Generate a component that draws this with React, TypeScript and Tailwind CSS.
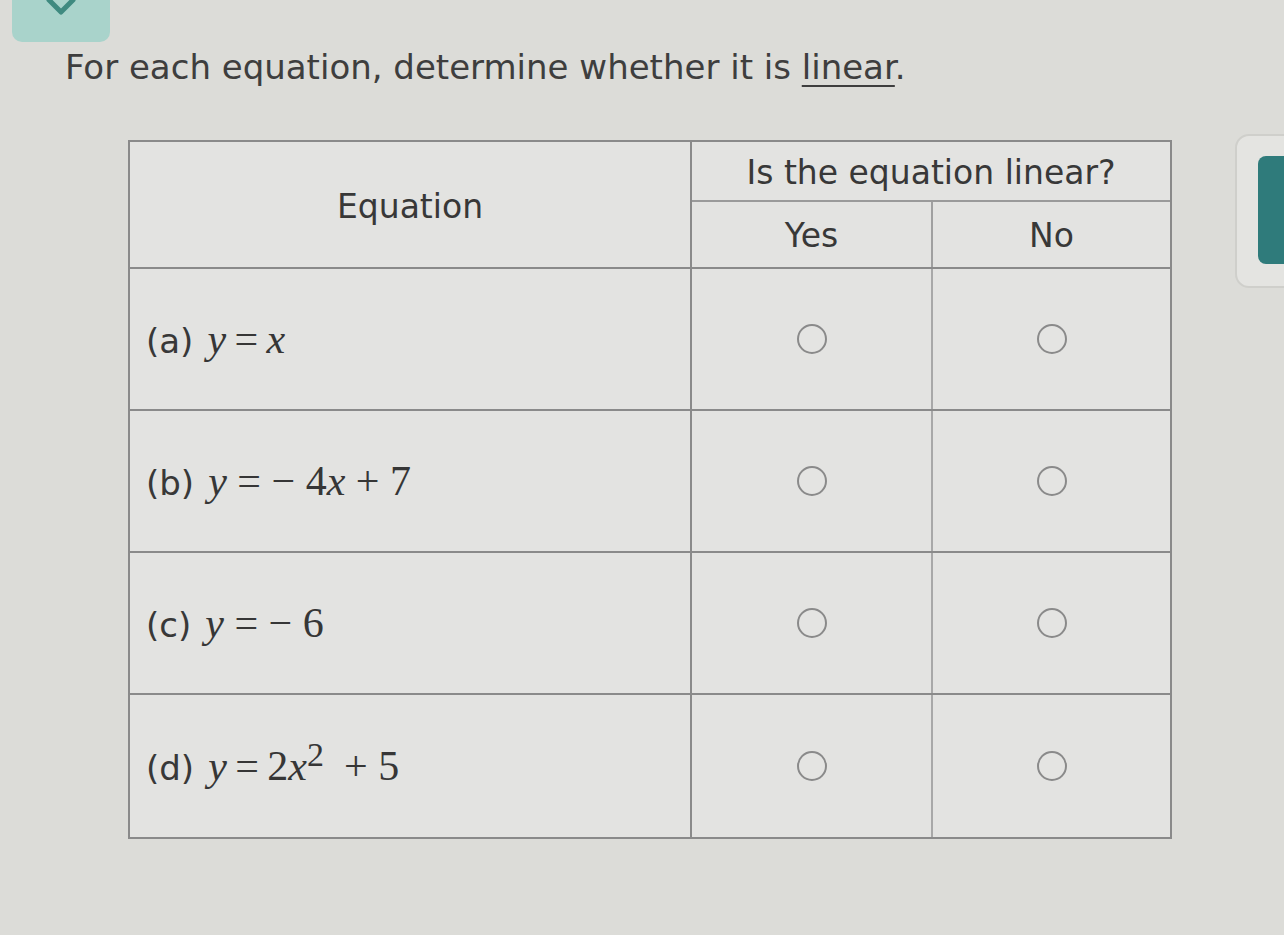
import React from 'react';

const Radio: React.FC = () => (
  <span className="block w-[30px] h-[30px] rounded-full border-2 border-[#8a8a8a] bg-[#e4e4e2]" />
);

const V: React.FC<{ children: React.ReactNode }> = ({ children }) => (
  <i className="font-['Liberation_Serif',serif]">{children}</i>
);

const rows: { label: string; eq: React.ReactNode }[] = [
  { label: '(a)', eq: <><V>y</V>{'\u2009=\u2009'}<V>x</V></> },
  { label: '(b)', eq: <><V>y</V> = − 4<V>x</V> + 7</> },
  { label: '(c)', eq: <><V>y</V> = − 6</> },
  {
    label: '(d)',
    eq: (
      <>
        <V>y</V>{'\u2009=\u2009'}2<V>x</V>
        <sup className="text-[34px] relative -top-[14px] mr-[20px]">2</sup>+ 5
      </>
    ),
  },
];

const App: React.FC = () => {
  return (
    <div className="w-[1284px] h-[935px] overflow-hidden bg-[#dcdcd8] text-[#383838] font-['DejaVu_Sans',sans-serif]">
      <div className="ml-[12px] w-[98px] h-[42px] rounded-b-[10px] bg-[#a9d3cb] flex items-start justify-center">
        <svg width="40" height="22" viewBox="0 0 40 22" className="-mt-[4px]">
          <path d="M8 4 L20 16 L32 4" fill="none" stroke="#3f8a80" strokeWidth="5" strokeLinecap="round" strokeLinejoin="round" />
        </svg>
      </div>

      <h1 className="ml-[65px] mt-[2px] text-[34px] leading-[46px] font-medium text-[#3e3e3e]">
        For each equation, determine whether it is <span className="underline underline-offset-[6px] decoration-[2px]">linear</span>.
      </h1>

      <div className="flex mt-[44px]">
        <div className="ml-[128px] w-[1044px] shrink-0 mt-[6px] border-2 border-[#8a8a8a] bg-[#e3e3e1]">
          <div className="grid grid-cols-[562px_241px_1fr] grid-rows-[60px_65px] border-b-2 border-[#8a8a8a]">
            <div className="row-span-2 flex items-center justify-center pt-[4px] text-[33px] border-r-2 border-[#8a8a8a]">
              Equation
            </div>
            <div className="col-span-2 flex items-center justify-center pt-[3px] text-[33px] border-b-2 border-[#9a9a9a]">
              Is the equation linear?
            </div>
            <div className="flex items-center justify-center pt-[3px] text-[33px] border-r-2 border-[#a0a0a0]">Yes</div>
            <div className="flex items-center justify-center pt-[3px] text-[33px]">No</div>
          </div>

          {rows.map((r, i) => (
            <div
              key={r.label}
              className={`grid grid-cols-[562px_241px_1fr] h-[142px] ${i < rows.length - 1 ? 'border-b-2 border-[#8a8a8a]' : ''}`}
            >
              <div className="flex items-center pl-[16px] border-r-2 border-[#8a8a8a]">
                <div className="flex items-baseline">
                  <span className="text-[34px] font-medium mr-[14px]">{r.label}</span>
                  <span className="text-[42px] font-['Liberation_Serif',serif] text-[#363636] whitespace-pre">{r.eq}</span>
                </div>
              </div>
              <div className="flex items-center justify-center border-r-2 border-[#a8a8a8]">
                <Radio />
              </div>
              <div className="flex items-center justify-center">
                <Radio />
              </div>
            </div>
          ))}
        </div>

        <div className="ml-[63px] w-[80px] h-[154px] shrink-0 rounded-[14px] border-2 border-[#cfcfcb] bg-[#e4e4e1] pl-[21px] pt-[20px]">
          <div className="w-[60px] h-[108px] rounded-[8px] bg-[#2f7b7b]" />
        </div>
      </div>
    </div>
  );
};

export default App;
